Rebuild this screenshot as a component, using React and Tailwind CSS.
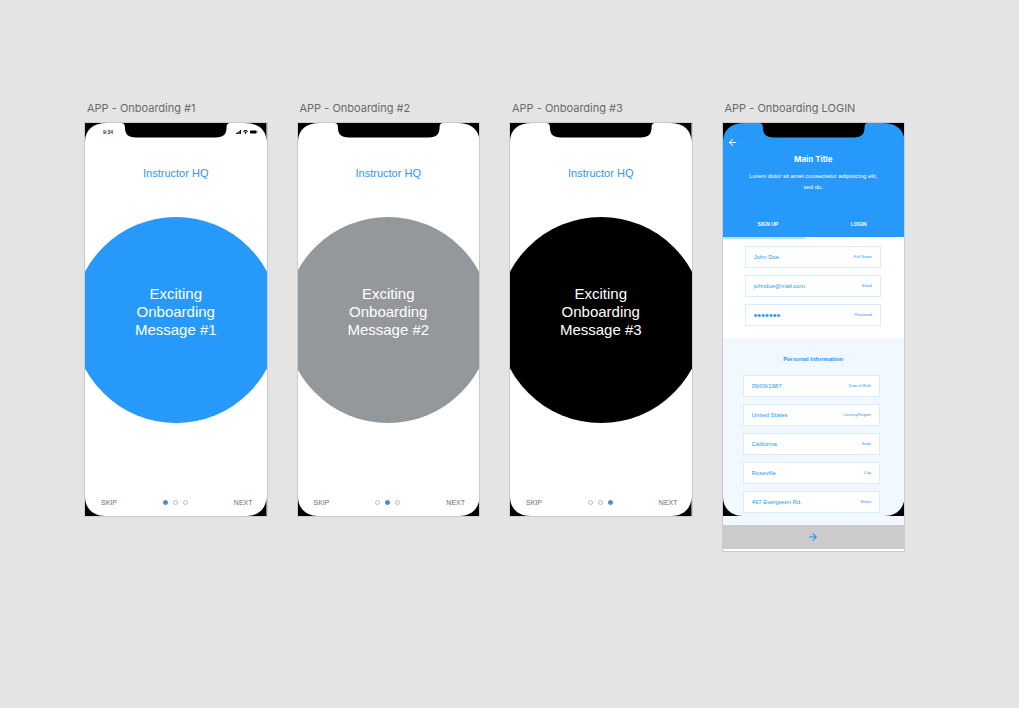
import React from "react";
import { MdArrowBack, MdArrowForward } from "react-icons/md";

const screens = [
  { id: 1, circle: "bg-[#2699fb]", status: true },
  { id: 2, circle: "bg-[#95989a]" },
  { id: 3, circle: "bg-black" },
];

const account = [
  { label: "Full Name", value: "John Doe", type: "text" },
  { label: "Email", value: "johndoe@mail.com", type: "email" },
  { label: "Password", value: "letmein", type: "password" },
];

const personal = [
  { label: "Date of Birth", value: "09/09/1987" },
  { label: "Country/Region", value: "United States" },
  { label: "State", value: "California" },
  { label: "City", value: "Roseville" },
  { label: "Street", value: "497 Evergreen Rd." },
];

function Bezel() {
  return (
    <svg
      className="pointer-events-none absolute inset-x-0 top-0 z-10 h-[393px] w-full"
      viewBox="0 0 182 393"
      preserveAspectRatio="none"
      aria-hidden="true"
    >
      <path d="M0 0H22C8 0 0 7 0 19Z" />
      <path d="M182 0H160C174 0 182 7 182 19Z" />
      <path d="M0 393H20C8 393 0 385 0 374Z" />
      <path d="M182 393H162C174 393 182 385 182 374Z" />
      <path d="M37 0H145C142.500 0.500 142 2 142 4C142 11 139 14.500 131 14.500H51C43 14.500 40 11 40 4C40 2 39.500 0.500 37 0Z" />
    </svg>
  );
}

function Artboard({ title, children }) {
  return (
    <section className="min-w-0">
      <h2 className="mb-[6px] truncate pl-[3px] font-[Inter,sans-serif] text-[11px] leading-4 text-[#6b6b6b]">
        {title}
      </h2>
      <div className="relative border border-[#cbcbcb] bg-white">
        <Bezel />
        {children}
      </div>
    </section>
  );
}

function StatusBar() {
  return (
    <div className="flex h-[18px] items-center justify-between pr-[9px] pl-[18px]">
      <span className="text-[5px] leading-none font-bold text-[#333]">9:34</span>
      <svg className="h-[6px] w-[22px]" viewBox="0 0 22 6" aria-hidden="true">
        <path d="M0 4h1v1H0zM1.300 3h1v2h-1zM2.600 2h1v3h-1zM3.900 1h1v4h-1z" />
        <path d="M7 2.200Q9.500 0 12 2.200L11.200 3Q9.500 1.700 7.800 3ZM8.200 3.400Q9.500 2.600 10.800 3.400L9.500 5Z" />
        <rect x="14" y="1.500" width="6.500" height="3" rx="0.700" />
        <rect x="20.800" y="2.400" width="0.600" height="1.200" />
      </svg>
    </div>
  );
}

function Onboarding({ id, circle, status }) {
  return (
    <Artboard title={`APP - Onboarding #${id}`}>
      <div className="flex h-[393px] flex-col">
        {status ? <StatusBar /> : <div className="h-[18px]" />}
        <h3 className="mt-6 text-center text-[11px] leading-4 text-[#2699fb]">Instructor HQ</h3>
        <div className="mt-[36px] flex justify-center overflow-hidden">
          <div
            className={`flex h-[206px] w-[206px] shrink-0 items-center justify-center rounded-full pb-4 ${circle}`}
          >
            <p className="w-[90px] text-center text-[15px] leading-[18px] text-white">
              {`Exciting Onboarding Message #${id}`}
            </p>
          </div>
        </div>
        <nav className="mt-auto mb-[9px] flex items-center justify-between pr-[14px] pl-4 text-[7px] leading-[9px] text-[#6d6d6d]">
          <button type="button">SKIP</button>
          <div className="flex gap-[5px]">
            {screens.map((s) => (
              <span
                key={s.id}
                className={`h-[5px] w-[5px] rounded-full border ${
                  s.id === id ? "border-[#3a8fdf] bg-[#3a8fdf]" : "border-[#bababa] bg-white"
                }`}
              />
            ))}
          </div>
          <button type="button">NEXT</button>
        </nav>
      </div>
    </Artboard>
  );
}

function Field({ label, value, type = "text" }) {
  return (
    <label className="flex h-[22px] items-center justify-between border border-[#d9eefe] bg-white px-2 text-[#2699fb]">
      <input
        type={type}
        defaultValue={value}
        className={`h-3 min-w-0 flex-1 bg-transparent leading-3 outline-none ${
          type === "password" ? "text-[11px]" : "text-[6px]"
        }`}
      />
      <span className="text-[4px] leading-3 whitespace-nowrap">{label}</span>
    </label>
  );
}

function Login() {
  return (
    <Artboard title="APP - Onboarding LOGIN">
      <header className="flex h-[114px] flex-col bg-[#2699fb] text-white">
        <button type="button" aria-label="Back" className="mt-[14px] ml-1 self-start">
          <MdArrowBack className="h-[11px] w-[11px]" />
        </button>
        <h3 className="mt-[5px] text-center font-[Inter,sans-serif] text-[8px] leading-3 font-bold">Main Title</h3>
        <p className="mx-auto mt-[6px] w-[138px] text-center text-[6px] leading-[11px]">
          Lorem dolor sit amet consectetur adipisicing elit, sed do.
        </p>
        <div className="mt-auto mb-[8px] grid grid-cols-2 text-[5px] leading-[9px] font-bold">
          <button type="button">SIGN UP</button>
          <button type="button">LOGIN</button>
        </div>
      </header>
      <div className="h-[2px] w-5/11 bg-[#bce0fd]" />
      <form>
        <div className="flex flex-col gap-[7px] pt-[7px] pr-[23px] pb-[12px] pl-[22px]">
          {account.map((f) => (
            <Field key={f.label} {...f} />
          ))}
        </div>
        <fieldset className="bg-[#f1f8ff] px-5 pt-[15px] pb-3">
          <h4 className="mb-[10px] text-center text-[6px] leading-3 font-bold text-[#2699fb]">
            Personal Information
          </h4>
          <div className="flex flex-col gap-[7px] pr-1">
            {personal.map((f) => (
              <Field key={f.label} {...f} />
            ))}
          </div>
        </fieldset>
        <button
          type="submit"
          aria-label="Continue"
          className="mb-[2px] flex h-6 w-full items-center justify-center bg-[#cbcbcb] text-[#1f8ff5]"
        >
          <MdArrowForward className="h-3 w-3" />
        </button>
      </form>
    </Artboard>
  );
}

export default function App() {
  return (
    <main className="min-h-screen bg-[#e4e4e4] pt-[100px] pr-[114px] pl-[84px] font-['Liberation_Sans',Arial,sans-serif]">
      <div className="grid grid-cols-4 items-start gap-[29px]">
        {screens.map((s) => (
          <Onboarding key={s.id} {...s} />
        ))}
        <Login />
      </div>
    </main>
  );
}
